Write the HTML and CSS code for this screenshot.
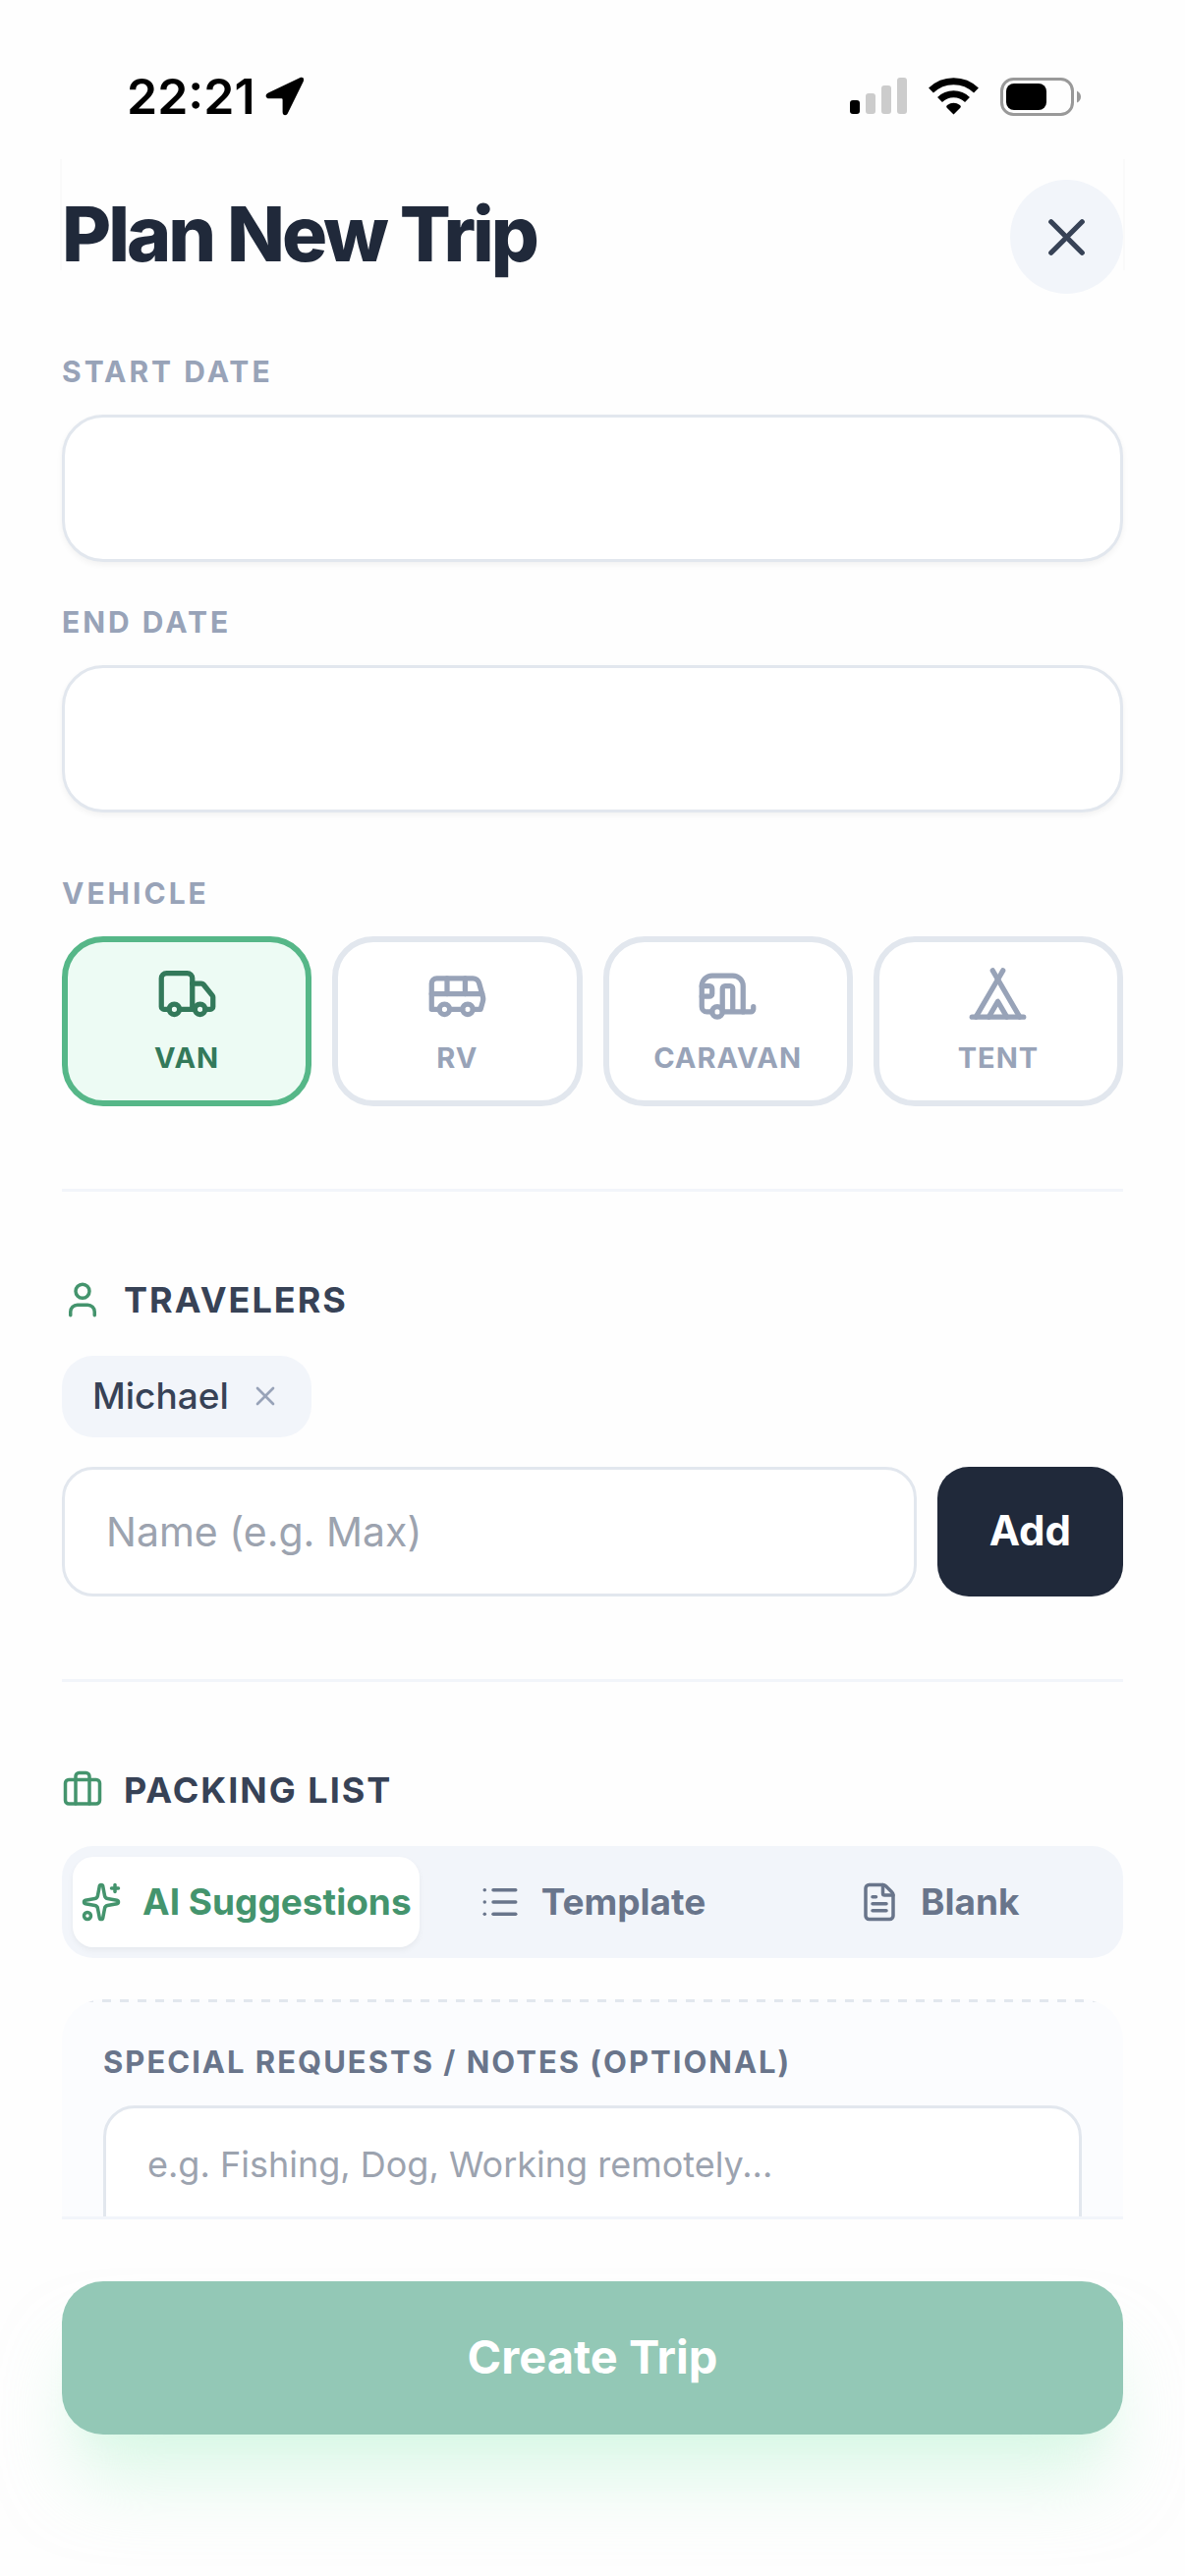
FILE: index.html
```
<!DOCTYPE html>
<html lang="en">
<head>
    <meta charset="UTF-8">
    <meta name="viewport" content="width=device-width, initial-scale=1.0">
    <title>Plan New Trip</title>
    <link rel="stylesheet" href="styles.css">
</head>
<body>
<div class="screen">
    <div class="status-bar">
        <div class="status-left">
            <span class="time">22:21</span>
            <svg class="location" viewBox="0 0 40 40" aria-hidden="true">
                <path d="M35 1.300 3 16.500C-.8 18.500.3 22.300 4 22.300H16.500Q17.600 22.300 17.600 23.400V36C17.600 40 21.700 40.300 23 37L38.700 5C40 1.500 38 0 35 1.300Z"/>
            </svg>
        </div>
        <div class="status-right">
            <svg class="signal" viewBox="0 0 58 38" aria-hidden="true">
                <rect x="0" y="23" width="10" height="14" rx="3"/>
                <rect class="dim" x="16" y="16" width="10" height="21" rx="3"/>
                <rect class="dim" x="32" y="8" width="10" height="29" rx="3"/>
                <rect class="dim" x="48" y="0" width="10" height="37" rx="3"/>
            </svg>
            <svg class="wifi" viewBox="0 0 51 38" aria-hidden="true">
                <path class="arc" d="M2.500 13A33 33 0 0 1 48.500 13"/>
                <path class="arc" d="M11.500 22.500A20 20 0 0 1 39.500 22.500"/>
                <path d="M25.500 37.500 18.500 30.500Q17.500 29 19 28Q25.500 23.500 32 28Q33.500 29 32.500 30.500Z"/>
            </svg>
            <svg class="battery" viewBox="0 0 82 39" aria-hidden="true">
                <rect class="shell" x="1.500" y="1.500" width="72" height="36" rx="12"/>
                <rect x="6" y="6" width="41" height="27" rx="8"/>
                <path class="tip" d="M78 13.500Q82 15.500 82 19.500T78 25.500Z"/>
            </svg>
        </div>
    </div>

    <header class="header">
        <h1>Plan New Trip</h1>
        <button type="button" class="close" aria-label="Close">
            <svg class="icon-lg" viewBox="0 0 24 24"><path d="M18 6 6 18"/><path d="m6 6 12 12"/></svg>
        </button>
    </header>

    <main class="content">
        <div class="field">
            <label class="label" for="start-date">START DATE</label>
            <input type="date" class="date" id="start-date">
        </div>
        <div class="field">
            <label class="label" for="end-date">END DATE</label>
            <input type="date" class="date" id="end-date">
        </div>

        <div class="field vehicle">
            <span class="label" id="vehicle-label">VEHICLE</span>
            <div class="vehicle-grid" role="group" aria-labelledby="vehicle-label">
                <button type="button" class="vehicle-card selected" aria-pressed="true">
                    <svg class="icon-lg" viewBox="0 0 24 24"><path d="M14 18V6a2 2 0 0 0-2-2H4a2 2 0 0 0-2 2v11a1 1 0 0 0 1 1h2"/><path d="M15 18H9"/><path d="M19 18h2a1 1 0 0 0 1-1v-3.650a1 1 0 0 0-.22-.624l-3.480-4.350A1 1 0 0 0 17.520 8H14"/><circle cx="17" cy="18" r="2"/><circle cx="7" cy="18" r="2"/></svg>
                    <span>VAN</span>
                </button>
                <button type="button" class="vehicle-card" aria-pressed="false">
                    <svg class="icon-lg" viewBox="0 0 24 24"><path d="M8 6v6"/><path d="M15 6v6"/><path d="M2 12h19.600"/><path d="M18 18h3s.5-1.700.8-2.800c.1-.4.2-.8.2-1.200 0-.4-.1-.8-.2-1.200l-1.400-5C20.100 6.800 19.100 6 18 6H4a2 2 0 0 0-2 2v10h3"/><circle cx="7" cy="18" r="2"/><path d="M9 18h5"/><circle cx="16" cy="18" r="2"/></svg>
                    <span>RV</span>
                </button>
                <button type="button" class="vehicle-card" aria-pressed="false">
                    <svg class="icon-lg" viewBox="0 0 24 24"><path d="M18 19V9a4 4 0 0 0-4-4H6a4 4 0 0 0-4 4v8a2 2 0 0 0 2 2h2"/><path d="M2 9h3a1 1 0 0 1 1 1v2a1 1 0 0 1-1 1H2"/><path d="M22 17v1a1 1 0 0 1-1 1H10v-9a1 1 0 0 1 1-1h2a1 1 0 0 1 1 1v9"/><circle cx="8" cy="19" r="2"/></svg>
                    <span>CARAVAN</span>
                </button>
                <button type="button" class="vehicle-card" aria-pressed="false">
                    <svg class="icon-lg" viewBox="0 0 24 24"><path d="M3.500 21 14 3"/><path d="M20.500 21 10 3"/><path d="M15.500 21 12 15l-3.500 6"/><path d="M2 21h20"/></svg>
                    <span>TENT</span>
                </button>
            </div>
        </div>

        <section class="section">
            <h2 class="section-title">
                <svg class="icon" viewBox="0 0 24 24"><path d="M19 21v-2a4 4 0 0 0-4-4H9a4 4 0 0 0-4 4v2"/><circle cx="12" cy="7" r="4"/></svg>
                TRAVELERS
            </h2>
            <div class="chips">
                <span class="chip">
                    Michael
                    <button type="button" class="chip-remove" aria-label="Remove Michael">
                        <svg class="icon-sm" viewBox="0 0 24 24"><path d="M18 6 6 18"/><path d="m6 6 12 12"/></svg>
                    </button>
                </span>
            </div>
            <div class="add-row">
                <input type="text" class="text-input" placeholder="Name (e.g. Max)" aria-label="Traveler name">
                <button type="button" class="add-btn">Add</button>
            </div>
        </section>

        <section class="section">
            <h2 class="section-title">
                <svg class="icon" viewBox="0 0 24 24"><path d="M16 20V4a2 2 0 0 0-2-2h-4a2 2 0 0 0-2 2v16"/><rect x="2" y="6" width="20" height="14" rx="2"/></svg>
                PACKING LIST
            </h2>
            <div class="tabs" role="tablist">
                <button type="button" class="tab active" role="tab" aria-selected="true">
                    <svg class="icon" viewBox="0 0 24 24"><path d="M11.017 2.814a1 1 0 0 1 1.966 0l1.051 5.558a2 2 0 0 0 1.594 1.594l5.558 1.051a1 1 0 0 1 0 1.966l-5.558 1.051a2 2 0 0 0-1.594 1.594l-1.051 5.558a1 1 0 0 1-1.966 0l-1.051-5.558a2 2 0 0 0-1.594-1.594l-5.558-1.051a1 1 0 0 1 0-1.966l5.558-1.051a2 2 0 0 0 1.594-1.594z"/><path d="M20 2v4"/><path d="M22 4h-4"/><circle cx="4" cy="20" r="2"/></svg>
                    AI Suggestions
                </button>
                <button type="button" class="tab" role="tab" aria-selected="false">
                    <svg class="icon" viewBox="0 0 24 24"><path d="M3 5h.01"/><path d="M3 12h.01"/><path d="M3 19h.01"/><path d="M8 5h13"/><path d="M8 12h13"/><path d="M8 19h13"/></svg>
                    Template
                </button>
                <button type="button" class="tab" role="tab" aria-selected="false">
                    <svg class="icon" viewBox="0 0 24 24"><path d="M6 22a2 2 0 0 1-2-2V4a2 2 0 0 1 2-2h8a2.400 2.400 0 0 1 1.704.706l3.588 3.588A2.400 2.400 0 0 1 20 8v12a2 2 0 0 1-2 2z"/><path d="M14 2v5a1 1 0 0 0 1 1h5"/><path d="M10 9H8"/><path d="M16 13H8"/><path d="M16 17H8"/></svg>
                    Blank
                </button>
            </div>
            <div class="notes">
                <label class="label" for="notes">SPECIAL REQUESTS / NOTES (OPTIONAL)</label>
                <textarea class="notes-input" id="notes" rows="3" placeholder="e.g. Fishing, Dog, Working remotely..."></textarea>
            </div>
        </section>
    </main>

    <footer class="footer">
        <button type="submit" class="create-btn">Create Trip</button>
    </footer>
</div>
</body>
</html>
```
FILE: styles.css
```
* {
    box-sizing: border-box;
}

body {
    margin: 0;
    background: #fefefe;
    color: #20293a;
    font-family: Inter, "Liberation Sans", sans-serif;
}

button, input, textarea {
    font-family: inherit;
    margin: 0;
}

button {
    border: none;
    padding: 0;
    cursor: pointer;
}

svg {
    display: block;
    flex-shrink: 0;
}

.screen {
    display: flex;
    flex-direction: column;
    height: 100vh;
    overflow: hidden;
}

/* Status bar */
.status-bar {
    display: flex;
    justify-content: space-between;
    align-items: center;
    height: 162px;
    padding: 34px 106px 0 129px;
    flex-shrink: 0;
}

.status-left, .status-right {
    display: flex;
    align-items: center;
}

.status-left { gap: 10px; }
.status-right { gap: 22px; }

.time {
    color: #000;
    font-size: 50px;
    line-height: 60px;
    font-weight: 600;
}

.location { width: 40px; height: 40px; }
.signal { width: 58px; height: 38px; }
.wifi { width: 51px; height: 38px; }
.battery { width: 82px; height: 39px; }

.signal .dim { fill: #ccc; }
.wifi .arc { fill: none; stroke: #000; stroke-width: 7; }
.battery .shell { fill: none; stroke: #999; stroke-width: 3; }
.battery .tip { fill: #999; }

/* Icons */
.icon, .icon-lg, .icon-sm {
    fill: none;
    stroke: currentColor;
    stroke-width: 2;
    stroke-linecap: round;
    stroke-linejoin: round;
}

.icon { width: 42px; height: 42px; }
.icon-lg { width: 63px; height: 63px; }
.icon-sm { width: 32px; height: 32px; }

/* Header */
.header {
    position: relative;
    display: flex;
    justify-content: space-between;
    align-items: flex-start;
    margin: 0 63px;
    padding: 21px 0;
    flex-shrink: 0;
}

/* soft edges on both sides of the header */
.header::before {
    content: "";
    position: absolute;
    top: 0;
    bottom: 45px;
    left: -2px;
    right: -2px;
    border: 2px solid #fafafa;
    border-width: 0 2px;
    pointer-events: none;
}

.header h1 {
    margin: 0;
    font-size: 77px;
    line-height: 110px;
    font-weight: 800;
    letter-spacing: -3px;
}

.close {
    display: flex;
    align-items: center;
    justify-content: center;
    width: 115px;
    height: 116px;
    border-radius: 50%;
    background: #f2f5fa;
    color: #374256;
}

/* Scrolling form */
.content {
    flex: 1;
    min-height: 0;
    overflow-y: auto;
    scrollbar-width: none;
    padding: 37px 63px 63px;
}

.field + .field {
    margin-top: 40px;
}

.field + .vehicle {
    margin-top: 61px;
}

.label {
    display: block;
    margin-bottom: 23px;
    color: #98a3b8;
    font-size: 30px;
    line-height: 42px;
    font-weight: 700;
    letter-spacing: 3px;
}

.date {
    display: block;
    width: 100%;
    height: 150px;
    padding: 0 42px;
    border: 3px solid #e2e7ee;
    border-radius: 42px;
    background: #fff;
    box-shadow: 0 3px 6px rgba(0,0,0,0.05);
    font-size: 42px;
}

.date::-webkit-datetime-edit,
.date::-webkit-calendar-picker-indicator {
    visibility: hidden;
}

.vehicle-grid {
    display: grid;
    grid-template-columns: repeat(4, 1fr);
    gap: 21px;
}

.vehicle-card {
    display: flex;
    flex-direction: column;
    align-items: center;
    gap: 11px;
    padding: 21px 0;
    border: 6px solid #e2e7ee;
    border-radius: 42px;
    background: #fff;
    color: #98a3b8;
    font-size: 29px;
    line-height: 45px;
    font-weight: 700;
    letter-spacing: 1px;
}

.vehicle-card.selected {
    border-color: #56b788;
    background: #edfbf4;
    color: #33795a;
}

.section {
    margin-top: 84px;
    padding-top: 84px;
    border-top: 3px solid #f2f5fa;
}

.section-title {
    display: flex;
    align-items: center;
    gap: 21px;
    margin: 0 0 31px;
    color: #374256;
    font-size: 36px;
    line-height: 52px;
    font-weight: 700;
    letter-spacing: 2px;
}

.section-title .icon {
    color: #44946d;
}

/* Travelers */
.chips {
    display: flex;
    flex-wrap: wrap;
    gap: 21px;
    margin-bottom: 30px;
}

.chip {
    display: flex;
    align-items: center;
    gap: 21px;
    padding: 16px 31px 17px;
    border-radius: 32px;
    background: #f2f5fa;
    color: #374256;
    font-size: 37px;
    line-height: 50px;
    font-weight: 500;
}

.chip-remove {
    background: none;
    color: #98a3b8;
}

.add-row {
    display: flex;
    gap: 21px;
}

.text-input {
    flex: 1;
    min-width: 0;
    height: 132px;
    padding: 0 42px;
    border: 3px solid #e2e7ee;
    border-radius: 32px;
    background: #fff;
    color: #374256;
    font-size: 41px;
}

::placeholder {
    color: #9ca3af;
    opacity: 1;
}

.add-btn {
    padding: 0 53px 3px;
    border-radius: 32px;
    background: #20293a;
    color: #fff;
    font-size: 42px;
    font-weight: 700;
}

/* Packing list */
.tabs {
    display: grid;
    grid-template-columns: repeat(3, 1fr);
    padding: 11px;
    border-radius: 32px;
    background: #f2f5fa;
}

.tab {
    display: flex;
    align-items: center;
    justify-content: center;
    gap: 21px;
    padding: 21px 0;
    border-radius: 21px;
    background: none;
    color: #69758b;
    font-size: 37px;
    line-height: 50px;
    font-weight: 700;
    white-space: nowrap;
}

.tab.active {
    background: #fff;
    color: #44946d;
    box-shadow: 0 3px 6px rgba(0,0,0,0.05);
}

/* dashed line along the top edge only */
.notes {
    margin-top: 42px;
    padding: 43px 42px 42px;
    border-radius: 42px;
    background: linear-gradient(90deg, #e2e7ee 50%, transparent 50%) 5px 0 / 18px 3px repeat-x #fbfcfe;
}

.notes .label {
    color: #69758b;
    font-size: 31px;
    letter-spacing: 2px;
}

.notes-input {
    display: block;
    width: 100%;
    padding: 31px 42px;
    border: 3px solid #e2e7ee;
    border-radius: 32px;
    background: #fff;
    color: #374256;
    font-size: 36px;
    line-height: 52px;
    resize: none;
}

/* Footer */
.footer {
    flex-shrink: 0;
    margin: 0 63px;
    padding: 63px 0 144px;
    border-top: 3px solid #f2f5fa;
}

.create-btn {
    width: 100%;
    height: 156px;
    padding-bottom: 4px;
    border-radius: 42px;
    background: #93c8b6;
    color: #fff;
    font-size: 47px;
    font-weight: 700;
    box-shadow: 0 60px 75px -15px rgba(187,243,212,0.5), 0 24px 30px -18px rgba(187,243,212,0.2);
}
```
